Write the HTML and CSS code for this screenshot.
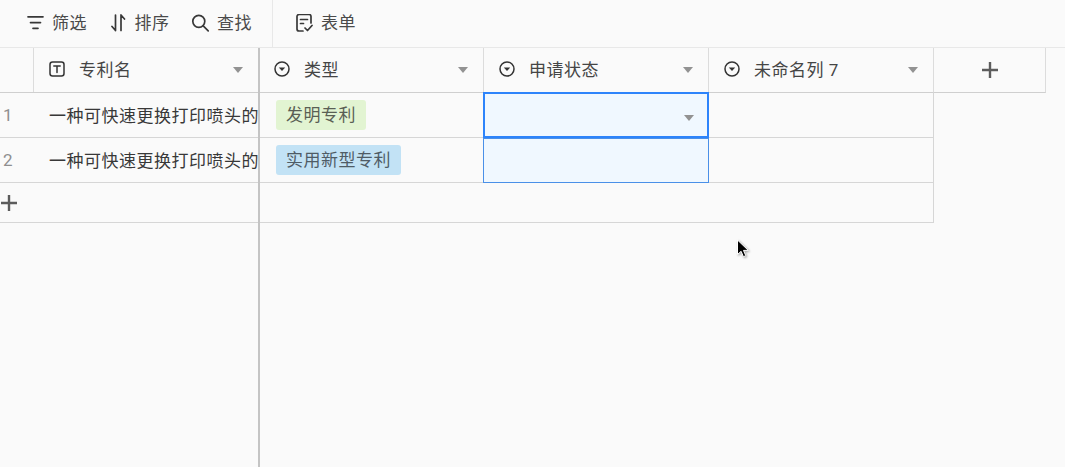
FILE: index.html
```html
<!DOCTYPE html>
<html lang="zh">
<head>
<meta charset="utf-8">
<title>专利表</title>
<link rel="stylesheet" href="styles.css">
</head>
<body>
<div class="toolbar">
  <div class="tool-group">
    <div class="tool"><svg class="tool-icon" viewBox="0 0 18 18"><path d="M2 2.800h15M4.500 8.600h10M7 14.300h5"/></svg><span>筛选</span></div>
    <div class="tool"><svg class="tool-icon" viewBox="0 0 18 18"><path d="M6.500 1v15.500M6.500 16.500l-3.500-4M12 16.500V1M12 1l3.500 4"/></svg><span>排序</span></div>
    <div class="tool"><svg class="tool-icon" viewBox="0 0 18 18"><circle cx="7.800" cy="7.300" r="6"/><path d="M12.200 11.800l5 5"/></svg><span>查找</span></div>
  </div>
  <div class="tool-group tool-group-right">
    <div class="tool"><svg class="tool-icon" viewBox="0 0 18 18"><path d="M8 17H4a2 2 0 0 1-2-2V2.500a2 2 0 0 1 2-2h10a2 2 0 0 1 2 2V9M5.500 5.500h7M5.500 9.500h3M10 14l2.500 2.500 4.500-5"/></svg><span>表单</span></div>
  </div>
</div>
<div class="sheet">
  <div class="pane-left">
    <div class="row row-head">
      <div class="cell cell-num"></div>
      <div class="cell cell-name head">
        <svg class="field-icon" viewBox="0 0 16 16"><rect x="1" y="1" width="14" height="14" rx="2.500"/><path d="M4.800 5h6.400M8 5v6.500"/></svg>
        <span class="head-label">专利名</span><i class="caret"></i>
      </div>
    </div>
    <div class="row row-body">
      <div class="cell cell-num num">1</div>
      <div class="cell cell-name text">一种可快速更换打印喷头的</div>
    </div>
    <div class="row row-body">
      <div class="cell cell-num num">2</div>
      <div class="cell cell-name text">一种可快速更换打印喷头的</div>
    </div>
    <div class="row row-add row-add-left"><svg class="plus plus-small" viewBox="0 0 16 16"><path d="M0 8h16M8 0v16"/></svg></div>
  </div>
  <div class="pane-right">
    <div class="row row-head">
      <div class="cell col col-first head"><svg class="field-icon" viewBox="0 0 16 16"><circle cx="8" cy="8" r="7"/><path class="fill" d="M4.800 6.500h6.400L8 10z"/></svg><span class="head-label">类型</span><i class="caret"></i></div>
      <div class="cell col head"><svg class="field-icon" viewBox="0 0 16 16"><circle cx="8" cy="8" r="7"/><path class="fill" d="M4.800 6.500h6.400L8 10z"/></svg><span class="head-label">申请状态</span><i class="caret"></i></div>
      <div class="cell col head"><svg class="field-icon" viewBox="0 0 16 16"><circle cx="8" cy="8" r="7"/><path class="fill" d="M4.800 6.500h6.400L8 10z"/></svg><span class="head-label">未命名列 7</span><i class="caret"></i></div>
      <div class="cell col-add"><svg class="plus" viewBox="0 0 16 16"><path d="M0 8h16M8 0v16"/></svg></div>
    </div>
    <div class="row row-body row-fit">
      <div class="cell col col-first tag-cell"><span class="tag tag-green">发明专利</span></div>
      <div class="cell col selected active"><i class="caret"></i></div>
      <div class="cell col"></div>
    </div>
    <div class="row row-body row-fit">
      <div class="cell col col-first tag-cell"><span class="tag tag-blue">实用新型专利</span></div>
      <div class="cell col selected"></div>
      <div class="cell col"></div>
    </div>
    <div class="row row-add row-add-right"></div>
  </div>
  <svg class="cursor" viewBox="0 0 14 20"><path d="M1.500 1v14.500l3.600-3.200 2.300 5.400 2.400-1-2.300-5.300h4.800z"/></svg>
</div>
</body>
</html>
```
FILE: styles.css
```css
* { box-sizing: border-box; }
html, body { margin: 0; height: 100%; }
body {
  width: 1065px;
  height: 467px;
  overflow: hidden;
  background: #fafafa;
  color: #383838;
  font-family: "Roboto", "Noto Sans CJK SC", sans-serif;
  font-size: 17px;
  letter-spacing: 0.5px;
  display: flex;
  flex-direction: column;
}
.toolbar {
  height: 48px;
  flex: none;
  display: flex;
  border-bottom: 1px solid #e8e8e8;
}
.tool-group {
  display: flex;
  align-items: center;
  gap: 21.5px;
  width: 273px;
  padding-left: 26px;
  border-right: 1px solid #e8e8e8;
}
.tool-group-right { border-right: 0; width: auto; padding-left: 22px; }
.tool { display: flex; align-items: center; gap: 8px; color: #4a4a4a; line-height: 20px; padding-bottom: 2px; }
.tool-icon { width: 18px; height: 18px; fill: none; stroke: #383838; stroke-width: 1.7; stroke-linecap: round; stroke-linejoin: round; }
.sheet { position: relative; flex: 1; display: flex; min-height: 0; }
.pane-left { width: 260px; flex: none; border-right: 2px solid #c4c4c4; }
.pane-right { flex: 1; }
.row { display: flex; border-bottom: 1px solid #d6d6d6; }
.row-head { height: 45px; border-bottom-color: #cfcfcf; }
.row-body { height: 45px; }
.row-add { height: 40px; }
.row-add-left { align-items: center; }
.pane-right .row-head { width: 786px; border-bottom: 0; }
.pane-right .row-head .cell { border-bottom: 1px solid #cfcfcf; }
.row-fit, .row-add-right { width: 674px; border-right: 1px solid #d6d6d6; }
.row-fit .col:last-child { border-right: 0; }
.cell { display: flex; align-items: center; height: 100%; }
.cell-num { width: 34px; flex: none; border-right: 1px solid #dcdcdc; }
.row-body .cell-num { border-right: 0; }
.num { color: #8f8f8f; padding-left: 3px; padding-bottom: 1px; }
.cell-name { flex: 1; min-width: 0; }
.head { padding-left: 15px; padding-right: 15px; padding-bottom: 2px; }
.col-first.head { padding-left: 14px; }
.text { padding-left: 15px; white-space: nowrap; overflow: hidden; padding-bottom: 1px; }
.field-icon { width: 16px; height: 16px; flex: none; fill: none; stroke: #333; stroke-width: 1.5; stroke-linecap: round; }
.field-icon .fill { fill: #333; stroke: none; }
.head-label { flex: 1; margin-left: 14px; color: #454545; white-space: nowrap; padding-bottom: 1px; }
.caret { width: 0; height: 0; flex: none; margin-top: 2px; border-left: 5px solid transparent; border-right: 5px solid transparent; border-top: 6px solid #929292; }
.col { width: 225px; flex: none; border-right: 1px solid #dcdcdc; }
.col-first { width: 224px; }
.col-add { width: 112px; flex: none; justify-content: center; border-right: 1px solid #dcdcdc; }
.tag-cell { padding-left: 16px; padding-bottom: 1px; }
.tag { height: 30px; line-height: 30px; padding: 0 10px; border-radius: 3px; color: #5a5f55; white-space: nowrap; }
.tag-green { background: #e2f4d2; }
.tag-blue { background: #c2e2f5; color: #4f5c66; }
.selected { position: relative; background: #f0f8ff; border-right: 0; }
.selected::after { content: ""; position: absolute; inset: 0 0 -1px -1px; border: 1px solid #4a90e8; pointer-events: none; z-index: 1; }
.active { justify-content: flex-end; padding: 3px 15px 0 0; }
.active::after { inset: -1px 0 -1px -1px; border: 2px solid #2d84fb; z-index: 2; }
.plus { display: block; width: 16px; height: 16px; fill: none; stroke: #5c5c5c; stroke-width: 2.4; }
.plus-small { margin-left: 1px; }
.cursor { position: absolute; left: 736px; top: 191px; width: 14px; height: 20px; fill: #000; stroke: #fff; stroke-width: 1; filter: drop-shadow(1px 1px 1px rgba(0,0,0,.35)); }
```
